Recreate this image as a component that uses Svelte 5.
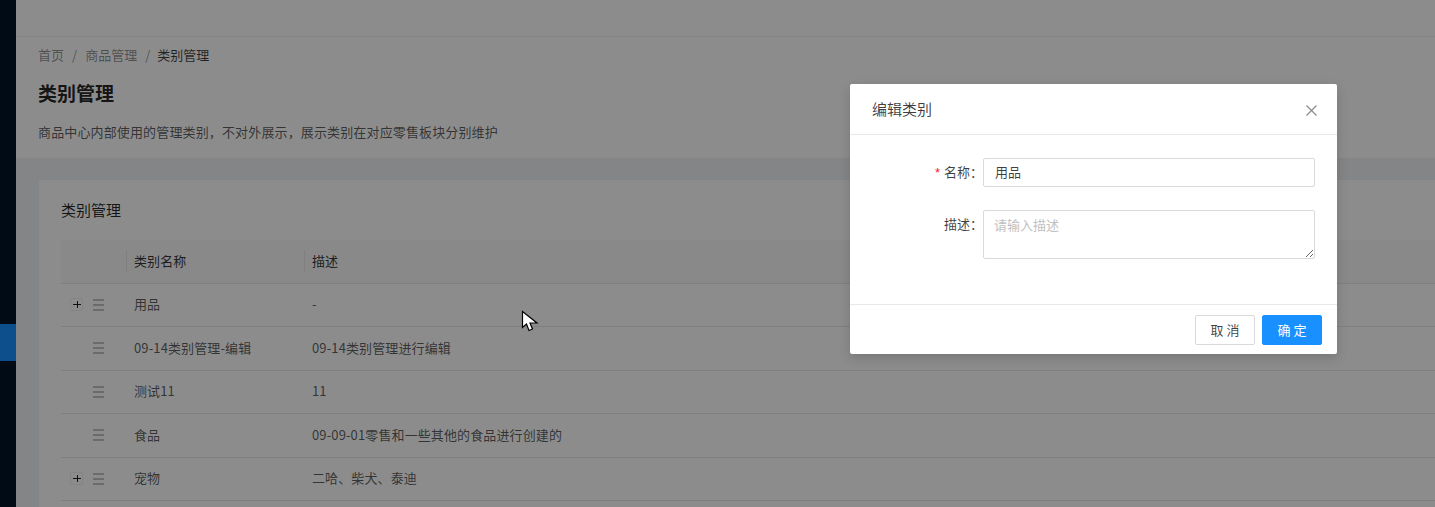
<script>
  const rows = [
    { name: "用品", desc: "-", expand: true },
    { name: "09-14类别管理-编辑", desc: "09-14类别管理进行编辑", expand: false },
    { name: "测试11", desc: "11", expand: false },
    { name: "食品", desc: "09-09-01零售和一些其他的食品进行创建的", expand: false },
    { name: "宠物", desc: "二哈、柴犬、泰迪", expand: true },
    { name: "", desc: "", expand: false },
  ];
</script>

<div class="layout">
  <aside class="sider">
    <div class="menu-item"></div>
  </aside>

  <main class="main">
    <header class="topbar"></header>

    <section class="page-head">
      <nav class="crumbs">
        <span>首页</span><i>/</i><span>商品管理</span><i>/</i><span class="current">类别管理</span>
      </nav>
      <h1>类别管理</h1>
      <p>商品中心内部使用的管理类别，不对外展示，展示类别在对应零售板块分别维护</p>
    </section>

    <section class="content">
      <div class="card">
        <h2>类别管理</h2>
        <div class="table">
          <div class="row head">
            <div class="cell"></div>
            <div class="cell sep">类别名称</div>
            <div class="cell sep">描述</div>
          </div>
          {#each rows as r}
            <div class="row">
              <div class="cell tools">
                {#if r.expand}
                  <span class="expand"></span>
                {:else}
                  <span class="expand none"></span>
                {/if}
                {#if r.name}
                  <span class="handle"><b></b><b></b><b></b></span>
                {/if}
              </div>
              <div class="cell">{r.name}</div>
              <div class="cell">{r.desc}</div>
            </div>
          {/each}
        </div>
      </div>
    </section>
  </main>

  <div class="mask"></div>

  <svg class="cursor" width="20" height="24" viewBox="0 0 20 24">
    <path d="M1.5 1.5 L1.5 17.5 L5.5 14 L8 20.5 L11.5 19 L9 13 L16 13 Z" fill="#fff" stroke="#000" stroke-width="1.2" />
  </svg>

  <div class="modal">
    <div class="modal-head">
      <span>编辑类别</span>
      <svg class="close" width="11" height="11" viewBox="0 0 11 11">
        <path d="M0.5 0.5 L10.5 10.5 M10.5 0.5 L0.5 10.5" stroke="#8c8c8c" stroke-width="1.2" fill="none" />
      </svg>
    </div>
    <div class="modal-body">
      <label class="lbl" for="f-name"><em>*</em>名称：</label>
      <input id="f-name" value="用品" />
      <label class="lbl" for="f-desc">描述：</label>
      <textarea id="f-desc" placeholder="请输入描述"></textarea>
    </div>
    <div class="modal-foot">
      <button>取 消</button>
      <button class="primary">确 定</button>
    </div>
  </div>
</div>

<style>
  :global(body) {
    margin: 0;
    overflow: hidden;
  }
  .layout {
    position: relative;
    display: flex;
    width: 1435px;
    height: 507px;
    overflow: hidden;
    background: #f0f2f5;
    color: rgba(0, 0, 0, 0.65);
    font-family: "Noto Sans CJK SC", "Liberation Sans", sans-serif;
    font-size: 13px;
  }
  .sider {
    flex: 0 0 16px;
    background: #001529;
    padding-top: 324px;
    box-sizing: border-box;
  }
  .menu-item {
    height: 37px;
    background: #1890ff;
  }
  .main {
    flex: 1;
    min-width: 0;
  }
  .topbar {
    height: 36px;
    background: #fff;
    border-bottom: 1px solid #f0f0f0;
  }
  .page-head {
    height: 121px;
    box-sizing: border-box;
    padding: 9px 22px 0;
    background: #fff;
  }
  .crumbs {
    display: flex;
    align-items: center;
    height: 18px;
    line-height: 18px;
    color: rgba(0, 0, 0, 0.45);
  }
  .crumbs i {
    font-style: normal;
    margin: 0 8px;
  }
  .crumbs i:nth-of-type(2) {
    margin-right: 7px;
  }
  .crumbs .current {
    color: rgba(0, 0, 0, 0.75);
  }
  h1 {
    margin: 15px 0 0;
    font-size: 19px;
    line-height: 28px;
    font-weight: 700;
    color: rgba(0, 0, 0, 0.85);
  }
  p {
    margin: 15px 0 0;
    line-height: 20px;
    letter-spacing: 0.14px;
  }
  .content {
    padding: 22px 0 0 23px;
  }
  .card {
    background: #fff;
    padding: 0 0 0 22px;
    height: 400px;
  }
  h2 {
    margin: 0;
    padding-top: 19px;
    height: 41px;
    font-size: 15px;
    line-height: 22px;
    font-weight: 400;
    color: rgba(0, 0, 0, 0.85);
  }
  .row {
    display: grid;
    grid-template-columns: 66px 178px 1fr;
    height: 43.5px;
    box-sizing: border-box;
    border-bottom: 1px solid #e8e8e8;
    align-items: center;
  }
  .row.head {
    background: #fafafa;
    color: rgba(0, 0, 0, 0.8);
  }
  .cell {
    position: relative;
    padding: 0 0 1px 7px;
    line-height: 20px;
    letter-spacing: 0.12px;
    white-space: nowrap;
  }
  .cell.sep::before {
    content: "";
    position: absolute;
    left: -1px;
    top: -1px;
    height: 22px;
    width: 1px;
    background: #e8e8e8;
  }
  .tools {
    display: flex;
    align-items: center;
    gap: 10px;
    padding: 0 0 0 9px;
  }
  .expand {
    position: relative;
    width: 13px;
    height: 13px;
    box-sizing: border-box;
    border: 1px solid #f0f0f0;
    border-radius: 2px;
  }
  .expand.none {
    visibility: hidden;
  }
  .expand::before,
  .expand::after {
    content: "";
    position: absolute;
    background: rgba(0, 0, 0, 0.85);
  }
  .expand::before {
    left: 2px;
    width: 8px;
    top: 5px;
    height: 1px;
  }
  .expand::after {
    top: 2px;
    height: 7px;
    left: 6px;
    width: 1px;
  }
  .handle {
    display: flex;
    flex-direction: column;
    justify-content: space-between;
    width: 11px;
    height: 12px;
  }
  .handle b {
    display: block;
    height: 2px;
    background: #c4c4c4;
  }
  .mask {
    position: absolute;
    inset: 0;
    background: rgba(0, 0, 0, 0.45);
  }
  .cursor {
    position: absolute;
    left: 521px;
    top: 310px;
  }
  .modal {
    position: absolute;
    left: 850px;
    top: 84px;
    width: 487px;
    height: 270px;
    display: flex;
    flex-direction: column;
    background: #fff;
    border-radius: 2px;
    box-shadow: 0 4px 12px rgba(0, 0, 0, 0.15);
  }
  .modal-head {
    display: flex;
    align-items: center;
    justify-content: space-between;
    height: 51px;
    box-sizing: border-box;
    padding: 0 20px 2px 22px;
    border-bottom: 1px solid #e8e8e8;
    font-size: 15px;
    color: rgba(0, 0, 0, 0.75);
  }
  .close {
    margin-top: 4px;
  }
  .modal-body {
    flex: 1;
    display: grid;
    grid-template-columns: 133px 332px;
    grid-auto-rows: min-content;
    row-gap: 23px;
    padding: 23px 0 0;
  }
  .lbl {
    height: 29px;
    overflow: hidden;
    text-align: right;
    font-size: 13px;
    line-height: 27px;
    color: rgba(0, 0, 0, 0.75);
  }
  .lbl em {
    font-style: normal;
    color: #f5222d;
    margin-right: 4px;
    font-family: "Liberation Sans", sans-serif;
  }
  input,
  textarea {
    display: block;
    box-sizing: border-box;
    width: 332px;
    margin: 0;
    border: 1px solid #d9d9d9;
    border-radius: 2px;
    outline: none;
    background: #fff;
    font: inherit;
    color: rgba(0, 0, 0, 0.75);
  }
  input {
    height: 29px;
    padding: 0 11px 2px;
  }
  textarea {
    height: 49px;
    padding: 4px 11px 0 10px;
    line-height: 20px;
    resize: vertical;
  }
  textarea::placeholder {
    color: #bfbfbf;
  }
  .modal-foot {
    display: flex;
    justify-content: flex-end;
    gap: 7px;
    height: 50px;
    box-sizing: border-box;
    padding: 10px 15px 0 0;
    border-top: 1px solid #e8e8e8;
  }
  button {
    width: 60px;
    height: 30px;
    padding: 0 0 2px;
    border: 1px solid #d9d9d9;
    border-radius: 2px;
    background: #fff;
    font: inherit;
    color: rgba(0, 0, 0, 0.75);
  }
  button.primary {
    border-color: #1890ff;
    background: #1890ff;
    color: #fff;
  }
</style>
